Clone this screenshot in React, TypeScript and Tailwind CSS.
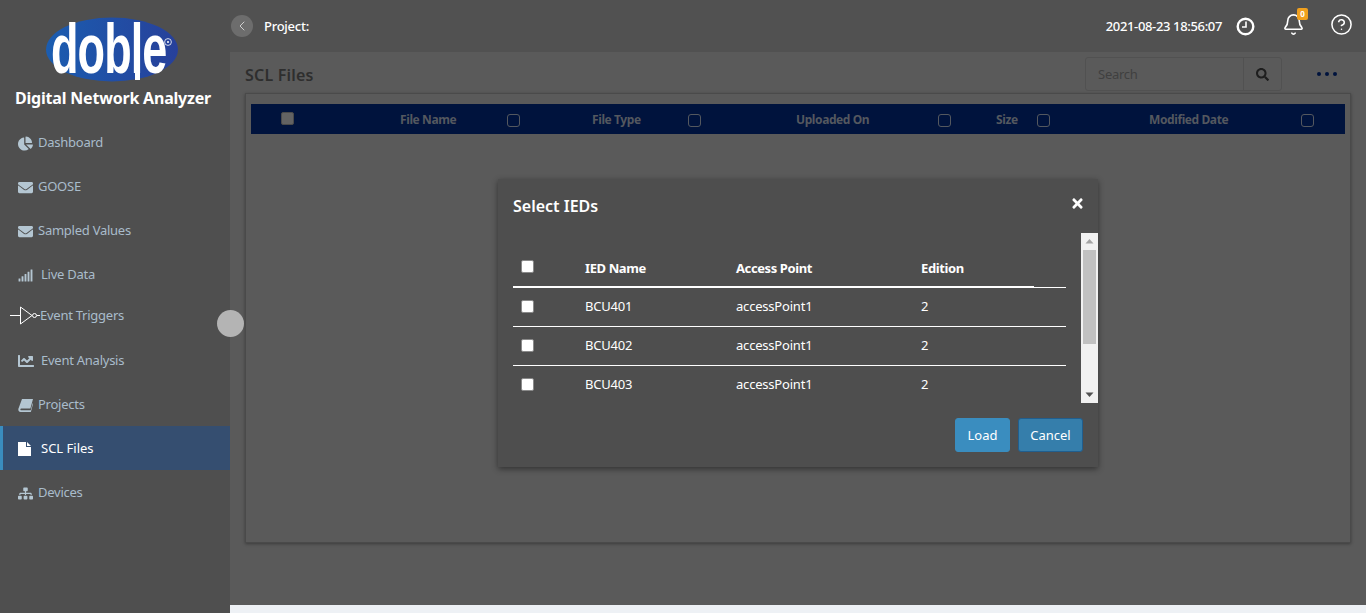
import { Bell, ChevronLeft, CircleHelp } from 'lucide-react'
import { FaChartLine, FaChartPie, FaEnvelope, FaSearch, FaSignal, FaSitemap, FaTimes } from 'react-icons/fa'

function GateIcon() {
  return (
    <svg width="30" height="20" viewBox="0 0 30 20" fill="none" stroke="#fff" strokeWidth="1" className="shrink-0">
      <path d="M0 9.5h10M10.5 1v17L22 9.5zM27 9.5h3" />
      <circle cx="24.5" cy="9.5" r="2" />
    </svg>
  )
}

function ClockIcon() {
  return (
    <svg width="19" height="19" viewBox="0 0 19 19" fill="none" stroke="#fff">
      <circle cx="9.5" cy="9.5" r="7.8" strokeWidth="2.4" />
      <path d="M10 4.5v5.5H6" strokeWidth="1.6" />
    </svg>
  )
}

function BookIcon() {
  return (
    <svg width="15" height="13" viewBox="0 0 15 13" fill="currentColor">
      <path d="M4 0h11l-2.6 9.4H3.2c-.9 0-1.3 1.8-.2 1.8h9.7l2-7.2.3 1-2 7.4c-.1.4-.4.6-.8.6H2.6C.9 13 0 11.4.4 9.8z" />
    </svg>
  )
}

function FileIcon() {
  return (
    <svg width="13" height="14" viewBox="0 0 13 14" fill="#fff" className="shrink-0">
      <path d="M0 0h8v5h5v9H0zM9 0l4 4H9z" />
    </svg>
  )
}

function DobleLogo() {
  return (
    <svg width="134" height="66" viewBox="0 0 134 66">
      <defs>
        <linearGradient id="dobleBlue" x1="0" x2="1" y1="0" y2="0">
          <stop offset="0" stopColor="#1b5db0" />
          <stop offset="1" stopColor="#27409a" />
        </linearGradient>
      </defs>
      <ellipse cx="67" cy="32.5" rx="66" ry="32" fill="url(#dobleBlue)" />
      <text
        transform="translate(6 56) scale(0.9 1.4)"
        fill="#fff"
        fontFamily="'Liberation Sans', sans-serif"
        fontSize="50"
        fontWeight="700"
        letterSpacing="-1"
      >
        doble
      </text>
      <rect x="90" y="50" width="5" height="13" fill="#fff" />
      <circle cx="123" cy="25" r="3.4" fill="none" stroke="#fff" strokeWidth="0.8" />
      <circle cx="123" cy="25" r="1" fill="#fff" />
    </svg>
  )
}

const navItems = [
  { label: 'Dashboard', icon: <FaChartPie size={15} />, gap: 'gap-[5px]' },
  { label: 'GOOSE', icon: <FaEnvelope size={15} />, gap: 'gap-[5px]' },
  { label: 'Sampled Values', icon: <FaEnvelope size={15} />, gap: 'gap-[5px]' },
  { label: 'Live Data', icon: <FaSignal size={15} />, gap: 'gap-[8px]' },
]

const navItemsAfter = [
  { label: 'Event Analysis', icon: <FaChartLine size={16} />, gap: 'gap-[7px]' },
  { label: 'Projects', icon: <BookIcon />, gap: 'gap-[5px]' },
]

const fileColumns = [
  { label: 'File Name', cell: 'w-[192px]', text: 'w-[107px]' },
  { label: 'File Type', cell: 'w-[204px]', text: 'w-[96px]' },
  { label: 'Uploaded On', cell: 'w-[200px]', text: 'w-[142px]' },
  { label: 'Size', cell: 'w-[153px]', text: 'w-[41px]' },
  { label: 'Modified Date', cell: 'w-[196px]', text: 'w-[152px]' },
]

const ieds = ['BCU401', 'BCU402', 'BCU403']

function NavRow({ label, icon, gap }: { label: string; icon: React.ReactNode; gap: string }) {
  return (
    <div className={`h-[44px] flex items-center pl-[18px] text-[13px] tracking-[-0.25px] text-[#a9bccb] ${gap}`}>
      <span className="text-[#b4c6d2] shrink-0">{icon}</span>
      <span>{label}</span>
    </div>
  )
}

function ModalCheck() {
  return <span className="block w-[13px] h-[13px] bg-white border border-[#8a8a8a] rounded-[2px] shrink-0" />
}

export default function App() {
  return (
    <div className="relative w-[1366px] h-[613px] overflow-hidden flex bg-[#eef1f5] font-['Noto_Sans',sans-serif]">
      {/* sidebar */}
      <aside className="w-[230px] h-full bg-[#4f4f4f] shrink-0">
        <div className="pl-[45px] pt-[17px]">
          <DobleLogo />
        </div>
        <div className="ml-[15px] mt-[3px] text-[16px] leading-[24px] font-bold tracking-[-0.2px] text-white whitespace-nowrap">Digital Network Analyzer</div>
        <nav className="mt-[11px]">
          {navItems.map((n) => (
            <NavRow key={n.label} {...n} />
          ))}
          <div className="h-[38px] flex items-center pl-[10px] text-[13px] tracking-[-0.25px] text-[#a9bccb]">
            <GateIcon />
            <span>Event Triggers</span>
          </div>
          <div className="h-[4px]" />
          {navItemsAfter.map((n) => (
            <NavRow key={n.label} {...n} />
          ))}
          <div className="h-[44px] -mt-[1px] mb-[1px] pt-[2px] flex items-center gap-[10px] pl-[15px] border-l-[3px] border-[#3a8dbf] bg-[#354e70] text-[13px] text-white">
            <FileIcon />
            <span>SCL Files</span>
          </div>
          <NavRow label="Devices" icon={<FaSitemap size={15} />} gap="gap-[5px]" />
        </nav>
      </aside>

      {/* main column */}
      <div className="flex-1 flex flex-col h-[605px]">
        <header className="h-[52px] bg-[#515151] flex items-center pl-[1px] pr-[13px] shrink-0">
          <span className="w-[22px] h-[22px] rounded-full bg-[#6d6d6d] flex items-center justify-center text-[#cfcfcf]">
            <ChevronLeft size={16} strokeWidth={1.5} />
          </span>
          <span className="ml-[11px] mt-[1px] text-[13px] font-medium tracking-[-0.25px] text-white">Project:</span>
          <span className="ml-auto mt-[1px] text-[13px] font-medium tracking-[-0.35px] text-white">2021-08-23 18:56:07</span>
          <span className="ml-[14px]">
            <ClockIcon />
          </span>
          <span className="relative ml-[27px] -mt-[4px] text-white">
            <Bell size={23} strokeWidth={1.7} />
            <span className="absolute -top-[5px] left-[15px] w-[11px] h-[12px] rounded-[2px] bg-[#f0a01e] text-white text-[8px] leading-[12px] font-bold text-center">0</span>
          </span>
          <span className="ml-[25px] -mt-[4px] text-white">
            <CircleHelp size={23} strokeWidth={1.6} />
          </span>
        </header>

        <main className="flex-1 bg-[#5a5a5a] pl-[15px] pr-[15px] pt-[5px]">
          <div className="flex items-center h-[34px]">
            <h1 className="mt-[1px] text-[16px] font-semibold tracking-[0.2px] text-[#2e2e2e]">SCL Files</h1>
            <div className="ml-auto flex items-center h-[34px] w-[197px] border border-[#515151] rounded-[3px]">
              <span className="flex-1 mt-[1px] pl-[12px] text-[13px] tracking-[-0.25px] text-[#404040]">Search</span>
              <span className="w-[38px] h-full flex items-center justify-center border-l border-[#515151] text-[#1e1e1e]">
                <FaSearch size={13} />
              </span>
            </div>
            <svg width="20" height="4" viewBox="0 0 20 4" fill="#00133d" className="ml-[35px] mr-[14px]">
              <circle cx="2" cy="2" r="2" />
              <circle cx="10" cy="2" r="2" />
              <circle cx="18" cy="2" r="2" />
            </svg>
          </div>

          <section className="mt-[2px] h-[450px] border border-[#4a4a4a] shadow-[0_1px_3px_rgba(0,0,0,0.35)] px-[5px] pt-[10px]">
            <div className="h-[30px] bg-[#00133d] flex items-center text-[12px] font-bold tracking-[-0.4px] text-[#54585f] whitespace-nowrap">
              <div className="w-[149px] pl-[30px]">
                <span className="block w-[13px] h-[13px] -mt-[2px] bg-[#636363] border border-[#4a4a4a] rounded-[2px]" />
              </div>
              {fileColumns.map((c) => (
                <div key={c.label} className={`flex items-center ${c.cell}`}>
                  <span className={`mt-[1px] ${c.text}`}>{c.label}</span>
                  <span className="block w-[13px] h-[13px] mt-[3px] border border-[#54585f] rounded-[3px]" />
                </div>
              ))}
            </div>
          </section>
        </main>
      </div>

      {/* sidebar toggle handle */}
      <span className="absolute left-[217px] top-[310px] w-[27px] h-[27px] rounded-full bg-[#b4b4b4]" />

      {/* Select IEDs dialog */}
      <div className="absolute left-[498px] top-[179px] w-[600px] h-[288px] bg-[#4e4e4e] shadow-[0_2px_6px_rgba(0,0,0,0.45)] flex flex-col">
        <div className="h-[54px] flex items-center justify-between pl-[15px] pr-[13px] shrink-0">
          <h2 className="text-[16px] font-semibold text-white">Select IEDs</h2>
          <FaTimes size={15} className="text-white -mt-[6px]" />
        </div>
        <div className="h-[170px] flex shrink-0">
          <div className="flex-1 overflow-hidden pl-[15px] pr-[15px]">
            <div className="h-[55px] flex items-center border-b border-white relative text-[13px] font-bold tracking-[-0.4px] text-white">
              <span className="w-[72px] pl-[8px] mt-[13px]">
                <ModalCheck />
              </span>
              <span className="w-[151px] mt-[17px]">IED Name</span>
              <span className="w-[185px] mt-[17px]">Access Point</span>
              <span className="mt-[17px]">Edition</span>
              <span className="absolute left-0 -bottom-[1px] w-[521px] h-[2px] bg-white" />
            </div>
            {ieds.map((name, i) => (
              <div key={name} className={`h-[39px] flex items-center border-b text-[13px] tracking-[-0.2px] text-white ${i < 2 ? 'border-white' : 'border-transparent'}`}>
                <span className="w-[72px] pl-[8px] -mt-[2px]">
                  <ModalCheck />
                </span>
                <span className="w-[151px]">{name}</span>
                <span className="w-[185px]">accessPoint1</span>
                <span>2</span>
              </div>
            ))}
          </div>
          <div className="w-[17px] bg-[#f1f1f1] flex flex-col items-center shrink-0">
            <svg width="9" height="17" viewBox="0 0 9 17" fill="#a3a3a3">
              <path d="M4.5 6 8.5 10.5H.5z" />
            </svg>
            <span className="w-[13px] h-[94px] bg-[#c1c1c1]" />
            <svg width="9" height="16" viewBox="0 0 9 16" fill="#505050" className="mt-auto">
              <path d="M.5 5.5h8L4.5 10z" />
            </svg>
          </div>
        </div>
        <div className="flex justify-end gap-[8px] pr-[15px] pt-[15px]">
          <button className="w-[55px] h-[34px] pt-[1px] rounded-[3px] bg-[#3a8dbf] border border-[#3a8dbf] text-[13px] text-white">Load</button>
          <button className="w-[65px] h-[34px] pt-[1px] rounded-[3px] bg-[#357eab] border border-[#205e8e] text-[13px] text-white">Cancel</button>
        </div>
      </div>
    </div>
  )
}
